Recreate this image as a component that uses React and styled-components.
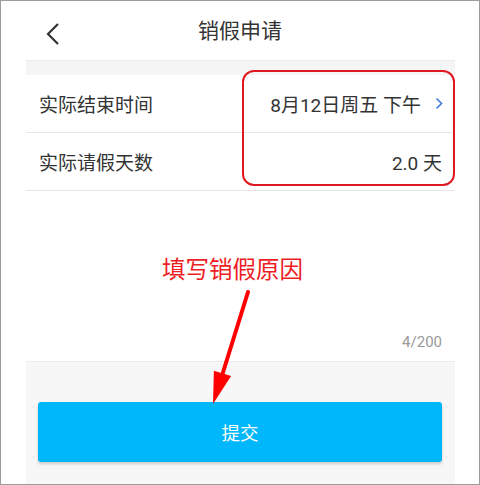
import styled, { createGlobalStyle } from 'styled-components'

const GlobalStyle = createGlobalStyle`
  html, body {
    margin: 0;
    padding: 0;
    background: #fff;
  }
  * { box-sizing: border-box; }
`

const FONT = `Roboto, 'Noto Sans CJK SC', sans-serif`

export default function App() {
  return (
    <>
      <GlobalStyle />
      <Frame>
        <Header>
          <BackButton>
            <svg width="14" height="22" viewBox="0 0 14 22">
              <polyline points="12,1 2,11 12,21" fill="none" stroke="#333" strokeWidth="2.2" strokeLinejoin="miter" />
            </svg>
          </BackButton>
          <Title>销假申请</Title>
        </Header>

        <Column>
          <Spacer />
          <Row>
            <Label>实际结束时间</Label>
            <Value>
              8月12日周五 下午
              <svg width="8" height="13" viewBox="0 0 8 13">
                <polyline points="1.5,1.5 6.5,6.5 1.5,11.5" fill="none" stroke="#3b7dd8" strokeWidth="1.6" />
              </svg>
            </Value>
          </Row>
          <Row>
            <Label>实际请假天数</Label>
            <Value $pad>2.0 天</Value>
          </Row>

          <Reason>
            <Counter>4/200</Counter>
          </Reason>

          <Footer>
            <SubmitButton>提交</SubmitButton>
          </Footer>

          <Highlight />
          <Note>填写销假原因</Note>
          <Arrow width="50" height="120" viewBox="0 0 50 120">
            <line x1="42" y1="2" x2="16.5" y2="84" stroke="#ff0000" strokeWidth="4" strokeLinecap="round" />
            <polygon points="7,114 7.9,80.7 25.1,86.1" fill="#ff0000" />
          </Arrow>
        </Column>
      </Frame>
    </>
  )
}

const Frame = styled.div`
  width: 480px;
  height: 485px;
  border: 1px solid #9c9c9c;
  background: #fff;
  font-family: ${FONT};
  display: flex;
  flex-direction: column;
  overflow: hidden;
`

const Header = styled.div`
  height: 59px;
  flex-shrink: 0;
  display: flex;
  align-items: center;
  justify-content: center;
  position: relative;
`

const BackButton = styled.div`
  position: absolute;
  left: 45px;
  top: 22px;
  display: flex;
`

const Title = styled.div`
  font-size: 21px;
  color: #333;
  margin-top: -3px;
`

const Column = styled.div`
  position: relative;
  margin: 0 24px 0 25px;
  flex: 1;
  display: flex;
  flex-direction: column;
`

const Spacer = styled.div`
  height: 15px;
  background: #f5f5f5;
  border-top: 1px solid #ebebeb;
`

const Row = styled.div`
  height: 58px;
  display: flex;
  align-items: center;
  justify-content: space-between;
  padding: 0 12px 0 13px;
  border-bottom: 1.5px solid #e6e6e6;
  background: #fff;
`

const Label = styled.div`
  font-size: 19px;
  color: #333;
`

const Value = styled.div`
  display: flex;
  align-items: center;
  gap: 14px;
  font-size: 19px;
  color: #333;
  padding-right: ${p => (p.$pad ? '1px' : '0')};
`

const Reason = styled.div`
  height: 170px;
  display: flex;
  align-items: flex-end;
  justify-content: flex-end;
  padding: 0 13px 10px 0;
`

const Counter = styled.div`
  font-size: 15px;
  color: #9a9a9a;
`

const Footer = styled.div`
  flex: 1;
  background: #f7f7f7;
  border-top: 1px solid #ebebeb;
  padding: 40px 13px 0 12px;
`

const SubmitButton = styled.div`
  height: 60px;
  border-radius: 3px;
  background: #00b7fc;
  color: #fff;
  font-size: 18.5px;
  display: flex;
  align-items: center;
  justify-content: center;
  box-shadow: 0 2px 3px rgba(0, 0, 0, 0.18);
`

const Highlight = styled.div`
  position: absolute;
  left: 216px;
  top: 10px;
  width: 213px;
  height: 116px;
  border: 2px solid #e01820;
  border-radius: 12px;
`

const Note = styled.div`
  position: absolute;
  left: 136px;
  top: 196px;
  font-size: 23.5px;
  line-height: 28px;
  color: #ee1c24;
  white-space: nowrap;
`

const Arrow = styled.svg`
  position: absolute;
  left: 180px;
  top: 230px;
`
